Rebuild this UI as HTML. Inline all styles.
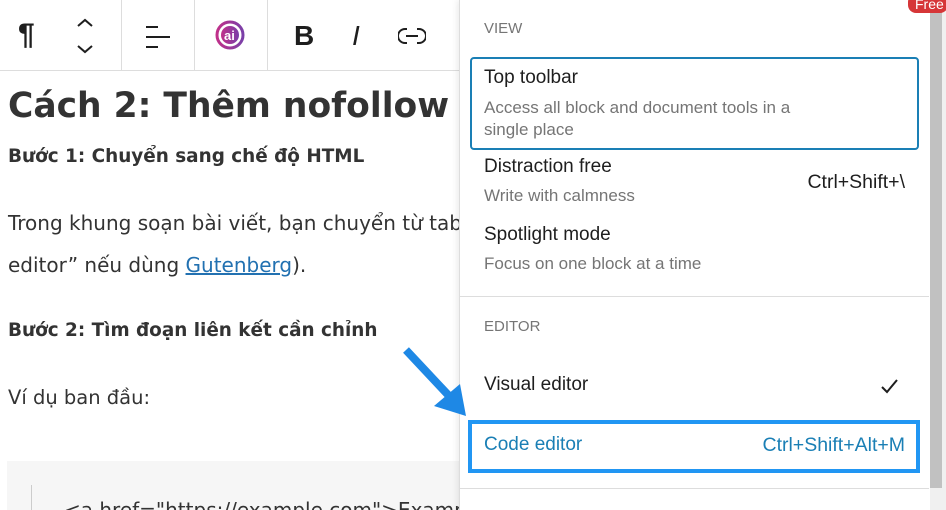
<!DOCTYPE html>
<html><head><meta charset="utf-8"><style>
*{margin:0;padding:0;box-sizing:border-box}
html,body{width:946px;height:510px;overflow:hidden}
body{background:#fff;position:relative;font-family:"Liberation Sans","DejaVu Sans",sans-serif}
.a{position:absolute;white-space:nowrap}
.ub{font-family:"DejaVu Sans","Liberation Sans",sans-serif;color:#333}
.m{font-family:"Liberation Sans",sans-serif}
.p{z-index:5}
</style></head><body>
<!-- toolbar -->
<div class="a" style="left:0;top:0;width:460px;height:71px;border-bottom:1px solid #ddd"></div>
<div class="a" style="left:121px;top:0;width:1px;height:71px;background:#ddd"></div>
<div class="a" style="left:194px;top:0;width:1px;height:71px;background:#ddd"></div>
<div class="a" style="left:267px;top:0;width:1px;height:71px;background:#ddd"></div>
<div class="a" style="left:18px;top:18px;font-size:30px;font-weight:bold;color:#1e1e1e">¶</div>
<svg class="a" style="left:74px;top:16px" width="22" height="40" viewBox="0 0 22 40"><path d="M4 10l7-6 7 6M4 30l7 6 7-6" fill="none" stroke="#1e1e1e" stroke-width="2"/></svg>
<svg class="a" style="left:144px;top:24px" width="28" height="26"><path d="M2 3h12M2 13h24M2 23h12" stroke="#1e1e1e" stroke-width="2"/></svg>
<svg class="a" style="left:215px;top:20px" width="32" height="32" viewBox="0 0 32 32"><defs><linearGradient id="g" x1="0" x2="1"><stop offset="0" stop-color="#c0308a"/><stop offset="1" stop-color="#7a3fa8"/></linearGradient></defs><circle cx="15" cy="15" r="13" fill="none" stroke="url(#g)" stroke-width="3"/><circle cx="15" cy="15" r="9" fill="url(#g)"/><text x="9" y="20" font-size="13" font-weight="bold" fill="#fff" font-family="Liberation Sans">ai</text></svg>
<div class="a" style="left:294px;top:20px;font-size:28px;font-weight:bold;color:#1e1e1e">B</div>
<div class="a" style="left:352px;top:20px;font-size:28px;font-style:italic;color:#1e1e1e">I</div>
<svg class="a" style="left:398px;top:26px" width="28" height="20"><path d="M9 3H7a7 7 0 000 14h2M19 3h2a7 7 0 010 14h-2M8 10h12" fill="none" stroke="#1e1e1e" stroke-width="2"/></svg>
<!-- content -->
<div class="a ub" style="left:8px;top:86px;font-size:34.5px;font-weight:bold">Cách 2: Thêm nofollow U</div>
<div class="a ub" style="left:8px;top:146px;font-size:18.4px;font-weight:bold">Bước 1: Chuyển sang chế độ HTML</div>
<div class="a ub" style="left:8px;top:211px;font-size:20px">Trong khung soạn bài viết, bạn chuyển từ tab</div>
<div class="a ub" style="left:8px;top:253px;font-size:20px">editor” nếu dùng <span style="color:#2271b1;text-decoration:underline">Gutenberg</span>).</div>
<div class="a ub" style="left:8px;top:320px;font-size:18.4px;font-weight:bold">Bước 2: Tìm đoạn liên kết cần chỉnh</div>
<div class="a ub" style="left:8px;top:386px;font-size:19.5px">Ví dụ ban đầu:</div>
<div class="a" style="left:7px;top:461px;width:455px;height:49px;background:#f6f6f6"></div>
<div class="a" style="left:31px;top:485px;width:1px;height:25px;background:#ccc"></div>
<div class="a ub" style="left:64px;top:498px;font-size:20px">&lt;a href="https://example.com"&gt;Example&lt;/a&gt;</div>
<!-- panel -->
<div class="a p" style="left:459px;top:0;width:471px;height:510px;background:#fff;border-left:1px solid #ddd;box-shadow:-2px 0 6px rgba(0,0,0,.08)"></div>
<div class="a p" style="left:930px;top:0;width:16px;height:510px;background:#f0f0f0"></div>
<div class="a p" style="left:930px;top:12px;width:12px;height:476px;background:#c1c1c1"></div>
<div class="a m p" style="left:908px;top:-6px;width:40px;height:19px;background:#d63638;border-radius:8px;color:#fff;font-size:14px;padding:2px 0 0 7px">Free</div>
<div class="a m p" style="left:484px;top:20px;font-size:15px;color:#757575">VIEW</div>
<div class="a p" style="left:470px;top:57px;width:449px;height:93px;border:2px solid #1a7fb5;border-radius:4px"></div>
<div class="a m p" style="left:484px;top:67px;font-size:19px;color:#1e1e1e">Top toolbar</div>
<div class="a m p" style="left:484px;top:97px;font-size:17px;color:#757575;line-height:22px">Access all block and document tools in a<br>single place</div>
<div class="a m p" style="left:484px;top:156px;font-size:19px;color:#1e1e1e">Distraction free</div>
<div class="a m p" style="left:484px;top:186px;font-size:17px;color:#757575">Write with calmness</div>
<div class="a m p" style="right:41px;top:171px;font-size:19.5px;color:#1e1e1e">Ctrl+Shift+\</div>
<div class="a m p" style="left:484px;top:224px;font-size:19px;color:#1e1e1e">Spotlight mode</div>
<div class="a m p" style="left:484px;top:254px;font-size:17px;color:#757575">Focus on one block at a time</div>
<div class="a p" style="left:460px;top:296px;width:469px;height:1px;background:#ddd"></div>
<div class="a m p" style="left:484px;top:318px;font-size:15px;color:#757575">EDITOR</div>
<div class="a m p" style="left:484px;top:374px;font-size:19px;color:#1e1e1e">Visual editor</div>
<svg class="a p" style="left:880px;top:378px" width="20" height="18"><path d="M2 9l5 5L17 2" fill="none" stroke="#1e1e1e" stroke-width="2"/></svg>
<div class="a p" style="left:468px;top:420px;width:452px;height:53px;border:4px solid #2196f3"></div>
<div class="a m p" style="left:484px;top:434px;font-size:19px;color:#1a7fb5">Code editor</div>
<div class="a m p" style="right:41px;top:434px;font-size:19.5px;color:#1a7fb5">Ctrl+Shift+Alt+M</div>
<div class="a p" style="left:460px;top:488px;width:469px;height:1px;background:#ddd"></div>
<!-- arrow -->
<svg class="a" style="left:396px;top:340px;z-index:6" width="80" height="85"><path d="M10 10L55 58" stroke="#1e88e5" stroke-width="8"/><path d="M38 66L70 76L64 44Z" fill="#1e88e5"/></svg>
</body></html>
